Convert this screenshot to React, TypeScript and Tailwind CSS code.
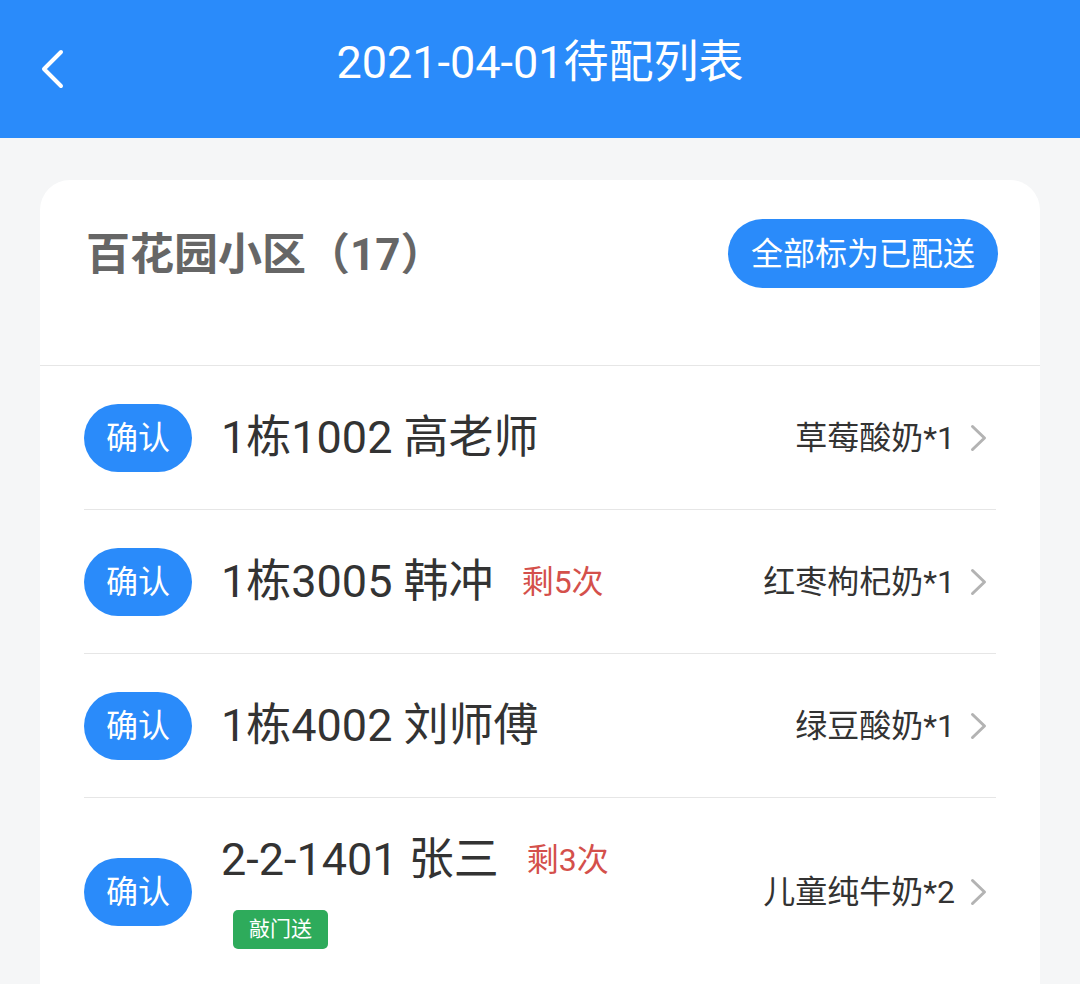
import React from "react";

type Delivery = {
  id: string;
  name: string;
  remain?: string;
  tag?: string;
  product: string;
};

const deliveries: Delivery[] = [
  { id: "1", name: "1栋1002 高老师", product: "草莓酸奶*1" },
  { id: "2", name: "1栋3005 韩冲", remain: "剩5次", product: "红枣枸杞奶*1" },
  { id: "3", name: "1栋4002 刘师傅", product: "绿豆酸奶*1" },
  { id: "4", name: "2-2-1401 张三", remain: "剩3次", tag: "敲门送", product: "儿童纯牛奶*2" },
];

function ChevronRight() {
  return (
    <svg width="17" height="28" viewBox="0 0 17 28" fill="none" className="shrink-0">
      <path d="M2.5 2.5 L14.5 14 L2.5 25.5" stroke="#b3b3b3" strokeWidth="3" strokeLinecap="round" strokeLinejoin="round" />
    </svg>
  );
}

function Row({ item }: { item: Delivery }) {
  const tall = Boolean(item.tag);
  return (
    <div
      className={
        tall
          ? "flex items-center pt-[36px] pb-[36px] border-b border-[#e6e6e6]"
          : "flex h-[144px] items-center border-b border-[#e6e6e6]"
      }
    >
      <button
        type="button"
        className="flex h-[68px] w-[108px] shrink-0 items-center justify-center rounded-full bg-[#2a8bfa] text-[32px] text-white"
      >
        确认
      </button>
      <div className="ml-[29px] flex flex-col items-start">
        <div className="flex items-center leading-[52px]">
          <span className="text-[45px] text-[#333333]">{item.name}</span>
          {item.remain ? <span className="ml-[28px] text-[32px] text-[#d4504b]">{item.remain}</span> : null}
        </div>
        {item.tag ? (
          <div className="ml-[12px] mt-[24px] flex h-[39px] items-center rounded-[5px] bg-[#2eab5b] px-[16px] text-[21px] text-white">
            {item.tag}
          </div>
        ) : null}
      </div>
      <div className="ml-auto mr-[9px] flex items-center gap-[15px]">
        <span className="text-[32px] text-[#333333]">{item.product}</span>
        <ChevronRight />
      </div>
    </div>
  );
}

export default function App() {
  return (
    <div className="min-h-screen bg-[#f5f6f7] font-['Roboto','Noto_Sans_CJK_SC',sans-serif]">
      <header className="grid h-[138px] grid-cols-[1fr_auto_1fr] items-center bg-[#2a8bfa]">
        <div className="pl-[40px]">
          <svg width="24" height="40" viewBox="0 0 24 40" fill="none">
            <path d="M21 3 L4 20 L21 37" stroke="white" strokeWidth="4" strokeLinecap="round" strokeLinejoin="round" />
          </svg>
        </div>
        <h1 className="pb-[12px] text-[45px] text-white">2021-04-01待配列表</h1>
        <div />
      </header>

      <section className="mx-10 mt-[42px] rounded-[30px] bg-white pb-[60px]">
        <div className="flex h-[186px] items-start justify-between border-b border-[#e6e6e6] pl-[46px] pr-[42px] pt-[39px]">
          <h2 className="mt-[2px] text-[44px] font-bold leading-[69px] text-[#666666]">百花园小区（17）</h2>
          <button
            type="button"
            className="flex h-[69px] items-center rounded-full bg-[#2a8bfa] px-[23px] text-[32px] text-white"
          >
            全部标为已配送
          </button>
        </div>

        <div className="mx-[44px]">
          {deliveries.map((item) => (
            <Row key={item.id} item={item} />
          ))}
        </div>
      </section>
    </div>
  );
}
